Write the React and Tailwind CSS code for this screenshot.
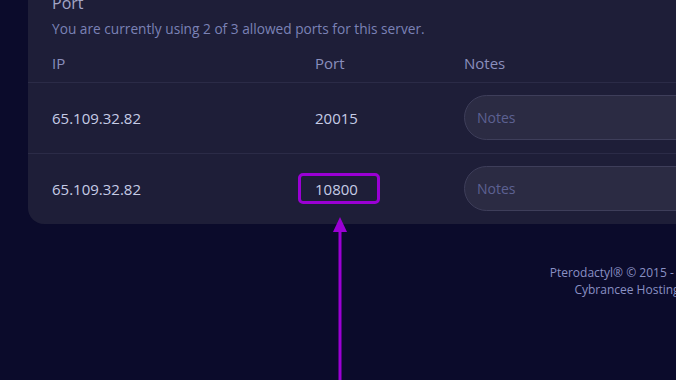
import React from "react";

const rows = [
  { ip: "65.109.32.82", port: "20015", highlight: false },
  { ip: "65.109.32.82", port: "10800", highlight: true },
];

export default function App() {
  return (
    <div
      className="relative w-[676px] h-[380px] overflow-hidden bg-[#0b0b2b]"
      style={{ fontFamily: '"Open Sans", "Noto Sans", sans-serif' }}
    >
      <div className="w-[980px] pl-[28px]">
        <div className="-mt-[25px] rounded-2xl bg-[#1e1e38] pt-4">
          <div className="px-6">
            <h2 className="text-[16px] leading-6 text-[#a4a6c6]">Port</h2>
            <p className="mt-1 text-[13.7px] leading-5 text-[#7b82b6]">
              You are currently using 2 of 3 allowed ports for this server.
            </p>
          </div>
          <div className="mt-[5px] grid h-[38px] grid-cols-[287px_149px_1fr] items-center text-[15px] text-[#8a8fbd]">
            <span className="pl-6">IP</span>
            <span>Port</span>
            <span>Notes</span>
          </div>
          {rows.map((r, i) => (
            <div
              key={i}
              className="grid h-[71px] grid-cols-[287px_149px_1fr] items-center border-t border-[#2b2b47] text-[15px] text-[#c6cce6]"
            >
              <span className="pl-6">{r.ip}</span>
              <span className="relative">
                {r.port}
                {r.highlight && (
                  <span className="absolute -left-[17px] -top-[5px] h-[31px] w-[82px] rounded-[5px] border-[3px] border-[#9a00d4]" />
                )}
              </span>
              <div className="-mt-[1px] flex h-[45px] items-center rounded-full border border-[#3e3e5a] bg-[#2b2b43] pl-[12px] text-[14px] text-[#5d6192]">
                Notes
              </div>
            </div>
          ))}
        </div>
        <div className="ml-[499px] mt-[40px] flex w-[200px] flex-col items-center whitespace-nowrap text-[12px] leading-[17px] text-[#8a90c4]">
          <span>Pterodactyl® © 2015 - 2024</span>
          <span>Cybrancee Hosting</span>
        </div>
      </div>
      <svg
        className="absolute left-[332px] top-[216px]"
        width="16"
        height="164"
        viewBox="0 0 16 164"
      >
        <line x1="8" y1="12" x2="8" y2="164" stroke="#9a00d4" strokeWidth="3" />
        <polygon points="8,1 1,16 15,16" fill="#9a00d4" />
      </svg>
    </div>
  );
}
